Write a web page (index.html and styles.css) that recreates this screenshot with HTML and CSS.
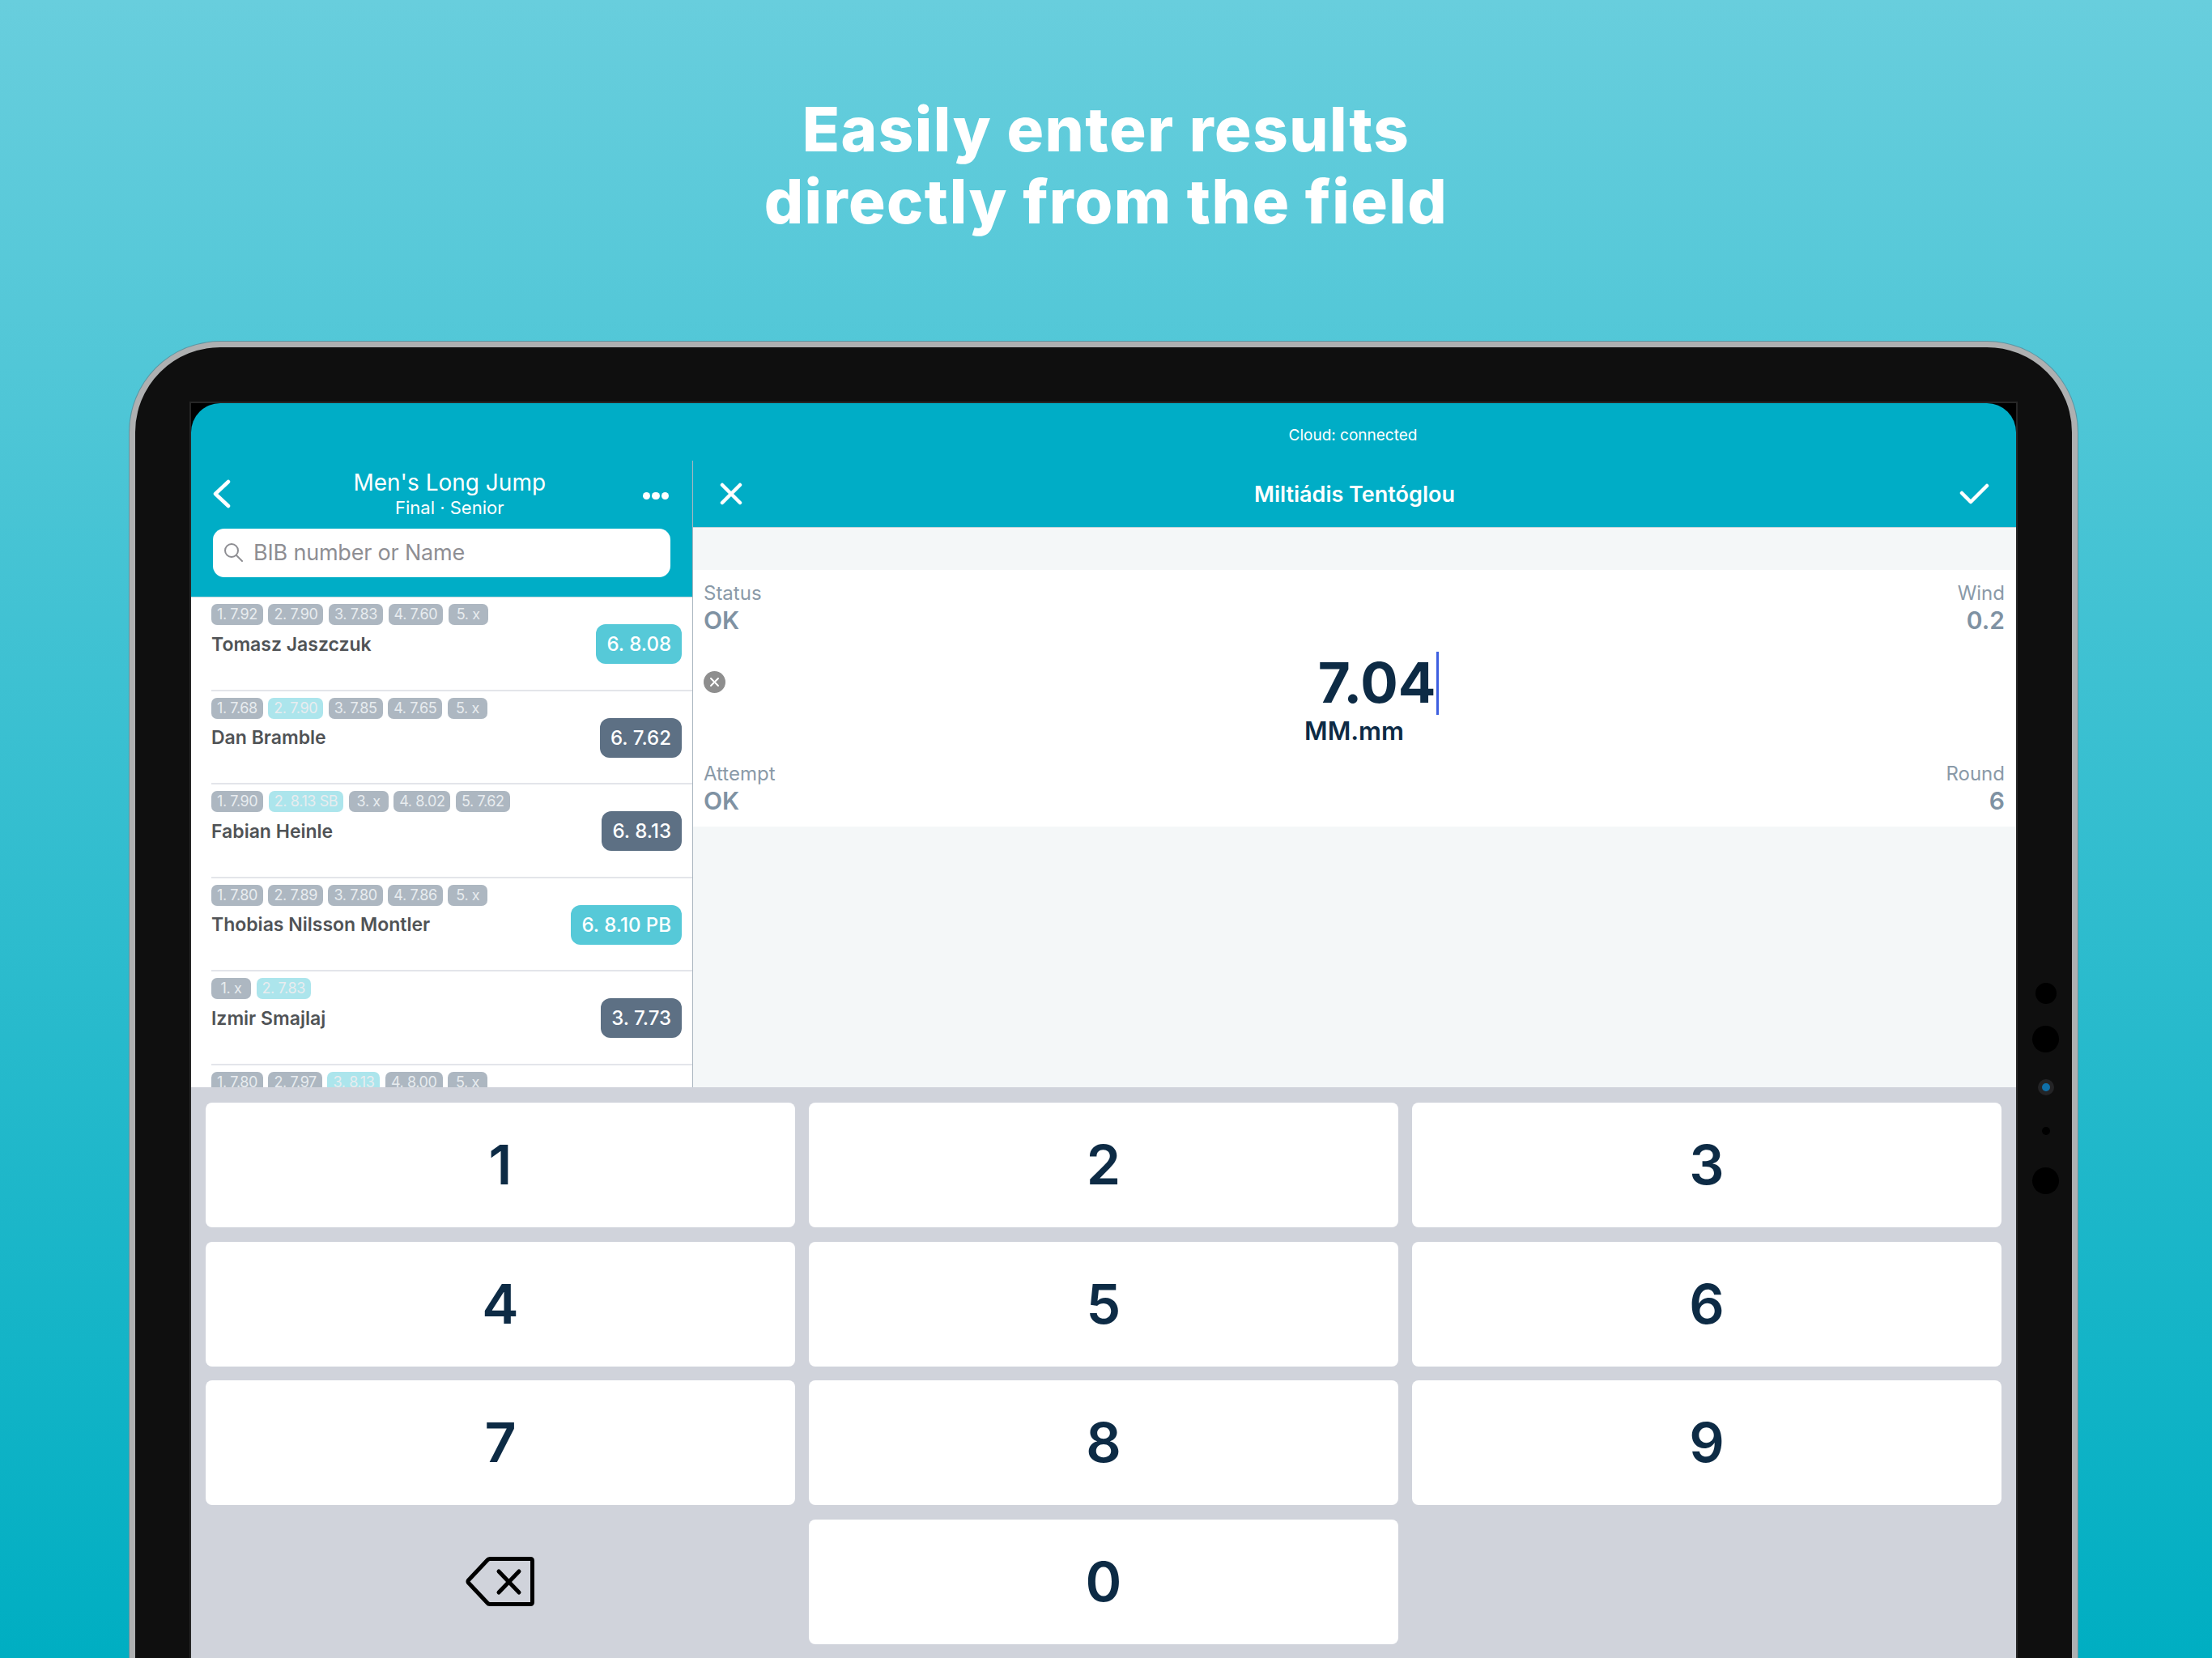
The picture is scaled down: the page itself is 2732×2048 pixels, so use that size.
FILE: index.html
```html
<!DOCTYPE html>
<html lang="en">
<head>
  <meta charset="UTF-8" />
  <title>Enter results</title>
  <link rel="stylesheet" href="styles.css">
</head>
<body>
  <h1 class="headline">Easily enter results<br>directly from the field</h1>

  <div class="device">
    <div class="sensors">
      <span class="sensor sensor-md"></span>
      <span class="sensor sensor-lg"></span>
      <span class="sensor sensor-led"></span>
      <span class="sensor sensor-sm"></span>
      <span class="sensor sensor-lg"></span>
    </div>

    <div class="screen">
      <div class="app">
        <div class="status-bar">
          <span></span>
          <span class="cloud">Cloud: connected</span>
        </div>

        <div class="split">
          <div class="left">
            <div class="left-head">
              <div class="nav">
                <svg class="back" viewBox="0 0 22 36"><polyline points="19,3 3,18 19,33"/></svg>
                <div class="nav-title">
                  <div class="event">Men's Long Jump</div>
                  <div class="event-sub">Final · Senior</div>
                </div>
                <div class="dots"><span></span><span></span><span></span></div>
              </div>
              <div class="search">
                <svg class="search-icon" viewBox="0 0 24 24"><circle cx="10" cy="10" r="8"/><line x1="16" y1="16" x2="23" y2="23"/></svg>
                <span>BIB number or Name</span>
              </div>
            </div>

            <div class="list">
              <div class="row">
                <div class="chips">
                  <span class="chip">1. 7.92</span><span class="chip">2. 7.90</span><span class="chip">3. 7.83</span><span class="chip">4. 7.60</span><span class="chip">5. x</span>
                </div>
                <div class="row-main">
                  <span class="name">Tomasz Jaszczuk</span>
                  <span class="badge badge-best">6. 8.08</span>
                </div>
              </div>
              <div class="row">
                <div class="chips">
                  <span class="chip">1. 7.68</span><span class="chip chip-best">2. 7.90</span><span class="chip">3. 7.85</span><span class="chip">4. 7.65</span><span class="chip">5. x</span>
                </div>
                <div class="row-main">
                  <span class="name">Dan Bramble</span>
                  <span class="badge">6. 7.62</span>
                </div>
              </div>
              <div class="row">
                <div class="chips">
                  <span class="chip">1. 7.90</span><span class="chip chip-best">2. 8.13 SB</span><span class="chip">3. x</span><span class="chip">4. 8.02</span><span class="chip">5. 7.62</span>
                </div>
                <div class="row-main">
                  <span class="name">Fabian Heinle</span>
                  <span class="badge">6. 8.13</span>
                </div>
              </div>
              <div class="row">
                <div class="chips">
                  <span class="chip">1. 7.80</span><span class="chip">2. 7.89</span><span class="chip">3. 7.80</span><span class="chip">4. 7.86</span><span class="chip">5. x</span>
                </div>
                <div class="row-main">
                  <span class="name">Thobias Nilsson Montler</span>
                  <span class="badge badge-best">6. 8.10 PB</span>
                </div>
              </div>
              <div class="row">
                <div class="chips">
                  <span class="chip">1. x</span><span class="chip chip-best">2. 7.83</span>
                </div>
                <div class="row-main">
                  <span class="name">Izmir Smajlaj</span>
                  <span class="badge">3. 7.73</span>
                </div>
              </div>
              <div class="row">
                <div class="chips">
                  <span class="chip">1. 7.80</span><span class="chip">2. 7.97</span><span class="chip chip-best">3. 8.13</span><span class="chip">4. 8.00</span><span class="chip">5. x</span>
                </div>
              </div>
            </div>
          </div>

          <div class="right">
            <div class="right-head">
              <svg class="close" viewBox="0 0 28 28"><line x1="3" y1="3" x2="25" y2="25"/><line x1="25" y1="3" x2="3" y2="25"/></svg>
              <span class="athlete">Miltiádis Tentóglou</span>
              <svg class="check" viewBox="0 0 37 26"><polyline points="3,12 14,23 34,3"/></svg>
            </div>

            <div class="card">
              <div class="info-row">
                <div class="info">
                  <div class="info-label">Status</div>
                  <div class="info-value">OK</div>
                </div>
                <div class="info info-right">
                  <div class="info-label">Wind</div>
                  <div class="info-value">0.2</div>
                </div>
              </div>

              <div class="entry">
                <svg class="clear" viewBox="0 0 27 27"><circle cx="13.5" cy="13.5" r="13.5"/><line x1="9" y1="9" x2="18" y2="18"/><line x1="18" y1="9" x2="9" y2="18"/></svg>
                <div class="measure">
                  <div class="measure-value">7.04<span class="cursor"></span></div>
                  <div class="measure-unit">MM.mm</div>
                </div>
              </div>

              <div class="info-row">
                <div class="info">
                  <div class="info-label">Attempt</div>
                  <div class="info-value">OK</div>
                </div>
                <div class="info info-right">
                  <div class="info-label">Round</div>
                  <div class="info-value">6</div>
                </div>
              </div>
            </div>
          </div>
        </div>

        <div class="keyboard">
          <div class="key">1</div>
          <div class="key">2</div>
          <div class="key">3</div>
          <div class="key">4</div>
          <div class="key">5</div>
          <div class="key">6</div>
          <div class="key">7</div>
          <div class="key">8</div>
          <div class="key">9</div>
          <div class="key key-clear">
            <svg class="backspace" viewBox="0 0 85 61">
              <path d="M30 2.5 H80 Q82.5 2.5 82.5 5 V56 Q82.5 58.5 80 58.5 H30 Q28 58.5 27 57 L3.5 32 Q2.5 30.5 3.5 29 L27 4 Q28 2.5 30 2.5 Z"/>
              <line x1="41" y1="18" x2="66" y2="44"/>
              <line x1="66" y1="18" x2="41" y2="44"/>
            </svg>
          </div>
          <div class="key">0</div>
        </div>
      </div>
    </div>
  </div>
</body>
</html>
```

FILE: styles.css
```css
body {
  margin: 0;
  width: 2732px;
  height: 2048px;
  overflow: hidden;
  font-family: 'Inter', 'Liberation Sans', sans-serif;
  background: linear-gradient(180deg, #68CEDD 0%, #00AEC2 100%);
}
.headline {
  margin: 0 0 128px;
  padding-top: 115px;
  height: 179px;
  font-size: 76px;
  line-height: 89px;
  font-weight: 800;
  letter-spacing: 1.5px;
  color: #fff;
  text-align: center;
}

/* tablet frame */
.device {
  position: relative;
  margin-left: 160px;
  padding: 69px;
  width: 2254px;
  background: #0F0F0F;
  border: 7px solid #AEB0B1;
  border-radius: 112px 112px 0 0;
  box-shadow: 0 0 0 1px #5C95A2;
}
.sensors {
  position: absolute;
  top: 785px;
  right: 16px;
  width: 33px;
  display: flex;
  flex-direction: column;
  align-items: center;
}
.sensor {
  display: block;
  border-radius: 50%;
  background: #000;
}
.sensor-md { width: 26px; height: 26px; }
.sensor-lg { width: 33px; height: 33px; margin-top: 26.5px; }
.sensor-led {
  width: 10px;
  height: 10px;
  margin-top: 38.5px;
  background: #0F6FA8;
  box-shadow: 0 0 0 5px #242426;
}
.sensor-sm { width: 10px; height: 10px; margin-top: 44px; }
.sensor-sm + .sensor-lg { margin-top: 39.5px; }

.screen {
  background: #000;
  box-shadow: 0 0 0 2px #262626;
}
.app {
  border-radius: 36px 36px 0 0;
  overflow: hidden;
  background: #00ADC6;
}
.status-bar {
  height: 71px;
  box-sizing: border-box;
  display: grid;
  grid-template-columns: 616px 1fr;
  align-items: center;
  padding-top: 7px;
}
.cloud {
  text-align: center;
  color: #fff;
  font-size: 19px;
}
.split {
  display: flex;
  height: 774px;
}

/* left column */
.left {
  width: 619px;
  border-right: 1px solid #AAB6C0;
  overflow: hidden;
  background: #fff;
}
.left-head {
  height: 169px;
  background: #00ADC6;
  border-bottom: 1px solid #C6D6DC;
  box-sizing: border-box;
}
.nav {
  height: 84px;
  display: flex;
  align-items: center;
  padding: 0 29px 0 27px;
}
.back {
  width: 22px;
  height: 36px;
  margin-top: -2px;
  fill: none;
  stroke: #fff;
  stroke-width: 4.5;
  stroke-linecap: round;
  stroke-linejoin: round;
}
.nav-title {
  flex: 1;
  padding-left: 32px;
  padding-bottom: 2px;
  text-align: center;
  color: #fff;
}
.event {
  font-size: 28px;
  line-height: 34px;
}
.event-sub {
  margin-top: 1px;
  font-size: 22px;
  line-height: 27px;
}
.dots {
  display: flex;
  gap: 2px;
  margin-top: 3px;
}
.dots span {
  width: 9.5px;
  height: 9.5px;
  border-radius: 50%;
  background: #fff;
}
.search {
  margin: 0 27px;
  height: 60px;
  display: flex;
  align-items: center;
  gap: 13px;
  padding: 0 0 2px 13px;
  box-sizing: border-box;
  background: #fff;
  border-radius: 14px;
  color: #8E8E93;
  font-size: 27px;
  letter-spacing: -0.2px;
}
.search-icon {
  width: 24px;
  height: 24px;
  fill: none;
  stroke: #8E8E93;
  stroke-width: 2;
  stroke-linecap: round;
}
.row {
  height: 115.5px;
  box-sizing: border-box;
  margin-left: 25px;
  padding: 8px 13px 0 0;
  border-bottom: 2px solid #E3E5EA;
}
.chips {
  display: flex;
  gap: 6.5px;
}
.chip {
  min-width: 49px;
  box-sizing: border-box;
  height: 26px;
  line-height: 26px;
  padding: 0 7px;
  border-radius: 7px;
  background: #ADB7C1;
  color: #E8ECEF;
  font-size: 18px;
  letter-spacing: -0.4px;
  text-align: center;
}
.chip-best {
  background: #ACE5EC;
}
.row-main {
  display: flex;
  align-items: center;
  justify-content: space-between;
  margin-top: -1px;
}
.name {
  font-size: 23px;
  font-weight: 600;
  color: #505356;
}
.badge {
  height: 49px;
  line-height: 49px;
  padding: 0 13px;
  border-radius: 12px;
  background: #5D7084;
  color: #fff;
  font-size: 24px;
  font-weight: 500;
}
.badge-best {
  background: #56C9D8;
}

/* right column */
.right {
  flex: 1;
  background: #F4F7F8;
}
.right-head {
  height: 83px;
  box-sizing: border-box;
  display: grid;
  grid-template-columns: 1fr auto 1fr;
  align-items: center;
  padding: 0 33px;
  background: #00ADC6;
  border-bottom: 1px solid #C6D6DC;
}
.athlete {
  color: #fff;
  font-size: 27px;
  font-weight: 600;
}
.close, .check {
  fill: none;
  stroke: #fff;
  stroke-width: 4.5;
  stroke-linecap: round;
  stroke-linejoin: round;
}
.close { width: 28px; height: 28px; }
.check { width: 37px; height: 26px; justify-self: end; }
.card {
  margin-top: 52px;
  height: 317px;
  box-sizing: border-box;
  padding: 14px 14px 14px 13px;
  background: #fff;
}
.info-row {
  display: flex;
  justify-content: space-between;
}
.info-right {
  text-align: right;
}
.info-label {
  font-size: 24px;
  line-height: 30px;
  color: #8A9AA8;
}
.info-value {
  font-size: 30px;
  line-height: 36px;
  font-weight: 600;
  color: #7F92A3;
}
.entry {
  height: 157px;
  box-sizing: border-box;
  padding-top: 20px;
  position: relative;
}
.clear {
  position: absolute;
  left: 0;
  top: 45px;
  width: 27px;
  height: 27px;
  fill: #8E8E8E;
  stroke: #fff;
  stroke-width: 2;
  stroke-linecap: round;
}
.clear circle { stroke: none; }
.measure {
  text-align: center;
  color: #0D2B45;
}
.measure-value {
  height: 78px;
  display: flex;
  align-items: center;
  justify-content: center;
  padding-left: 60px;
  font-size: 69px;
  line-height: 76px;
  font-weight: 700;
}
.cursor {
  width: 3px;
  height: 78px;
  margin: 2px 0 0 1px;
  background: #3D5FE0;
}
.measure-unit {
  margin-top: 3px;
  font-size: 31px;
  line-height: 36px;
  font-weight: 600;
}

/* number pad */
.keyboard {
  height: 705px;
  box-sizing: border-box;
  padding: 19px 18px 0;
  display: grid;
  grid-template-columns: repeat(3, 1fr);
  grid-auto-rows: 154px;
  gap: 17.5px 17px;
  background: #D0D3DB;
}
.key {
  display: flex;
  align-items: center;
  justify-content: center;
  padding-bottom: 2px;
  box-sizing: border-box;
  background: #fff;
  border-radius: 8px;
  color: #0D2B45;
  font-size: 68px;
  font-weight: 600;
}
.key-clear {
  padding: 0 2px 0 0;
  background: transparent;
}
.backspace {
  width: 85px;
  height: 61px;
  fill: none;
  stroke: #000;
  stroke-width: 5;
  stroke-linecap: round;
  stroke-linejoin: round;
}
```
